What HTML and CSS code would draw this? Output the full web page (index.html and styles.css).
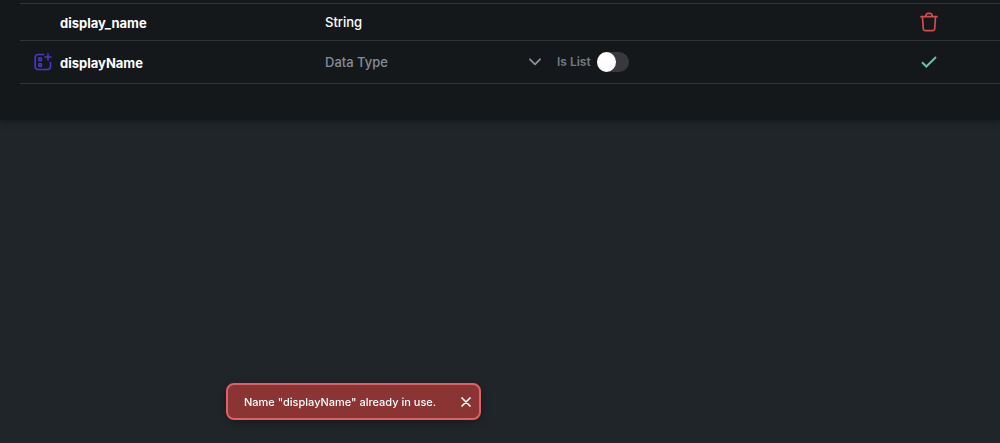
FILE: index.html
```html
<!DOCTYPE html>
<html lang="en">
<head>
<meta charset="utf-8">
<meta name="viewport" content="width=device-width, initial-scale=1">
<title>Data type fields</title>
<link rel="stylesheet" href="styles.css">
</head>
<body>
<main class="panel">
  <div class="fields">
    <div class="field">
      <span class="field-name">display_name</span>
      <span class="field-type">String</span>
      <button class="icon-button" type="button" aria-label="Delete field">
        <svg class="icon-trash" viewBox="0 0 18 20" fill="none" stroke="currentColor" stroke-width="1.7" stroke-linecap="round" stroke-linejoin="round"><path d="M1 4.700h16M5.500 4.500l.7-2.100c.3-.8.8-1.100 1.500-1.100h2.600c.7 0 1.200.3 1.500 1.100l.7 2.100M2.500 5l.8 11.700c.1 1.300.8 2 2.100 2h7.200c1.300 0 2-.7 2.100-2L15.500 5"/></svg>
      </button>
    </div>
    <div class="field field-new">
      <svg class="icon-add" viewBox="0 0 18 18" fill="none" stroke="currentColor" stroke-width="1.600" stroke-linecap="round" stroke-linejoin="round"><path d="M9.500 1.500H4.300C2.400 1.500 1.200 2.700 1.200 4.500v9c0 1.800 1.200 3 3.100 3h9.200c1.800 0 3-1.200 3-3v-4M14 1v6M11 4h6"/><rect x="4.800" y="5" width="2.600" height="2.600" rx=".6"/><rect x="4.800" y="10.800" width="2.600" height="2.600" rx=".6"/></svg>
      <span class="field-name">displayName</span>
      <span class="type-select">
        <select aria-label="Data Type"><option>Data Type</option></select>
        <svg class="icon-chevron" viewBox="0 0 12 8" fill="none" stroke="currentColor" stroke-width="1.800" stroke-linecap="round" stroke-linejoin="round"><path d="M1 1.300l5 5 5-5"/></svg>
      </span>
      <label class="list-toggle">Is List<input class="switch" type="checkbox" role="switch"></label>
      <button class="icon-button" type="button" aria-label="Confirm field">
        <svg class="icon-check" viewBox="0 0 16 12" fill="none" stroke="currentColor" stroke-width="2"><path d="M1 6.200l4.300 4.300L15 1"/></svg>
      </button>
    </div>
  </div>
</main>
<div class="toast" role="alert">
  <span>Name "displayName" already in use.</span>
  <button class="toast-close" type="button" aria-label="Dismiss">
    <svg viewBox="0 0 10 10" fill="none" stroke="currentColor" stroke-width="1.700" stroke-linecap="round"><path d="M1 1l8 8M9 1l-8 8"/></svg>
  </button>
</div>
</body>
</html>
```
FILE: styles.css
```css
* {
  box-sizing: border-box;
}

body {
  margin: 0;
  min-height: 100vh;
  background: #1f2529;
  color: #fff;
  font-family: "Inter", "Liberation Sans", sans-serif;
  font-size: 13px;
  font-weight: 500;
  line-height: 20px;
}

button,
select {
  border: 0;
  padding: 0;
  background: none;
  color: inherit;
  font: inherit;
  cursor: pointer;
}

svg {
  display: block;
}

.panel {
  padding: 3px 0 36px 20px;
  background: #14181b;
  box-shadow: 0 1px 6px rgba(10, 12, 14, 0.5);
}

.fields {
  border-top: 1px solid #303438;
}

.field {
  display: grid;
  grid-template-columns: 40px 265px 232px 1fr 142px;
  align-items: center;
  height: 37px;
  border-bottom: 1px solid #303438;
}

.field-new {
  height: 43px;
}

.field-name {
  grid-column: 2;
  padding-top: 2px;
  font-weight: 700;
}

.field-type {
  grid-column: 3;
}

.icon-button {
  grid-column: 5;
  justify-self: start;
  display: grid;
  place-items: center;
  width: 18px;
  height: 24px;
  margin-left: 62px;
}

.icon-trash {
  width: 18px;
  height: 20px;
  color: #d64a4a;
}

.icon-check {
  width: 16px;
  height: 12px;
  color: #5fc6a3;
}

.icon-add {
  width: 18px;
  height: 18px;
  margin-left: 14px;
  color: #4a37c8;
}

.type-select {
  display: grid;
  grid-template-columns: 1fr 12px;
  align-items: center;
  padding-right: 16px;
  color: #8b929c;
}

.type-select select {
  grid-area: 1 / 1 / 2 / 3;
  appearance: none;
  color: #858c97;
}

.icon-chevron {
  grid-area: 1 / 2;
  width: 12px;
  height: 8px;
  pointer-events: none;
}

.list-toggle {
  display: flex;
  align-items: center;
  gap: 6px;
  color: #737a85;
  font-size: 12px;
  font-weight: 600;
}

.switch {
  appearance: none;
  display: flex;
  width: 32px;
  height: 20px;
  margin: 0;
  border-radius: 10px;
  background: #39393d;
  cursor: pointer;
}

.switch::before {
  content: "";
  width: 19px;
  height: 20px;
  border-radius: 50%;
  background: #fff;
}

.switch:checked {
  justify-content: flex-end;
  background: #4a37c8;
}

.toast {
  position: fixed;
  bottom: 23px;
  left: 226px;
  display: flex;
  align-items: center;
  gap: 24px;
  padding: 7px 7px 6px 16px;
  border: 2px solid #df6067;
  border-radius: 8px;
  background: #8a3433;
  box-shadow: 0 2px 8px rgba(0, 0, 0, 0.3);
  font-size: 11px;
}

.toast-close {
  display: grid;
  place-items: center;
  width: 12px;
  height: 20px;
}

.toast-close svg {
  width: 10px;
  height: 10px;
}
```
